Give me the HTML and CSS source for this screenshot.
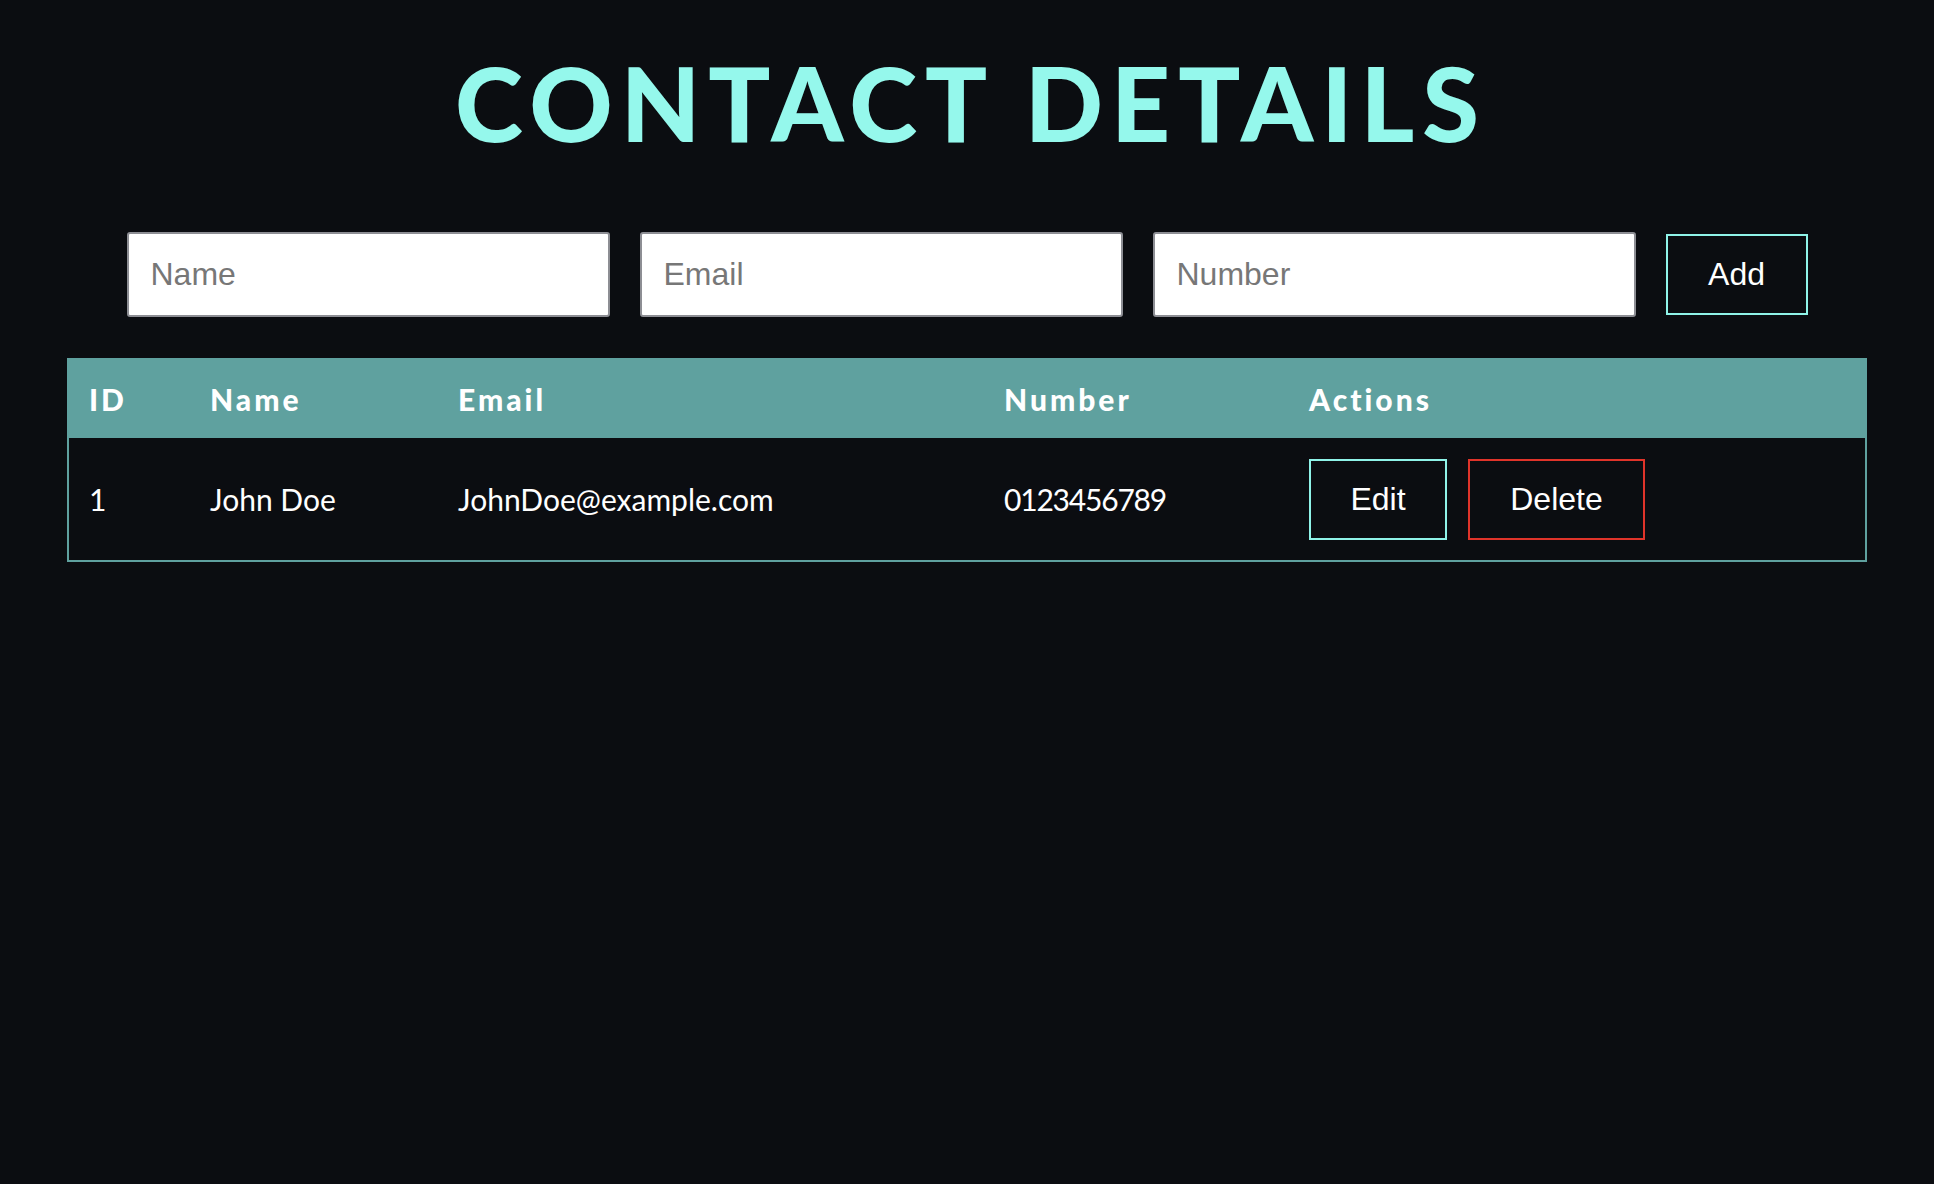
FILE: index.html
```html
<!DOCTYPE html>
<html lang="en">
<head>
<meta charset="utf-8">
<title>Contact Details</title>
<link rel="stylesheet" href="styles.css">
</head>
<body>
<h1 class="title">CONTACT DETAILS</h1>
<form class="add-form">
  <input class="field" type="text" placeholder="Name">
  <input class="field" type="email" placeholder="Email">
  <input class="field" type="text" placeholder="Number">
  <button class="btn btn-add" type="button">Add</button>
</form>
<table class="contacts">
  <thead>
    <tr>
      <th class="col-id">ID</th>
      <th class="col-name">Name</th>
      <th class="col-email">Email</th>
      <th class="col-number">Number</th>
      <th class="col-actions">Actions</th>
    </tr>
  </thead>
  <tbody>
    <tr>
      <td>1</td>
      <td>John Doe</td>
      <td>JohnDoe@example.com</td>
      <td class="cell-number">0123456789</td>
      <td>
        <div class="actions">
          <button class="btn btn-edit" type="button">Edit</button>
          <button class="btn btn-delete" type="button">Delete</button>
        </div>
      </td>
    </tr>
  </tbody>
</table>
</body>
</html>
```

FILE: styles.css
```css
html, body {
  margin: 0;
  padding: 0;
}
body {
  background: #0b0d11;
  color: #ffffff;
  font-family: "Lato", "Open Sans", sans-serif;
  min-height: 1184px;
}
.title {
  margin: 51px 0 0;
  padding-left: 8px;
  font-family: "Lato", sans-serif;
  font-weight: 900;
  font-size: 103px;
  line-height: 1;
  text-align: center;
  color: #95f8ec;
  letter-spacing: 8px;
}
.add-form {
  display: flex;
  justify-content: center;
  align-items: center;
  gap: 30px;
  margin-top: 78px;
}
.field {
  box-sizing: border-box;
  width: 483px;
  height: 85px;
  padding: 0 22px;
  border: 2px solid #8d8e94;
  border-radius: 3px;
  background: #ffffff;
  font-family: "Liberation Sans", Arial, sans-serif;
  font-size: 32px;
  color: #222;
}
.field::placeholder {
  color: #777777;
}
.btn {
  box-sizing: border-box;
  background: transparent;
  color: #ffffff;
  font-family: "Liberation Sans", Arial, sans-serif;
  font-size: 32px;
  cursor: pointer;
  border-radius: 0;
}
.btn-add {
  width: 142px;
  height: 81px;
  border: 2px solid #8ff3e8;
}
.contacts {
  width: 1800px;
  margin: 41px auto 0;
  border-collapse: collapse;
  border: 2px solid #5fa19f;
}
.contacts th {
  background: #5fa19f;
  height: 78px;
  padding: 0 0 0 20px;
  text-align: left;
  font-weight: 900;
  font-size: 30px;
  letter-spacing: 3px;
  color: #ffffff;
}
.contacts td {
  height: 122px;
  padding: 0 0 0 20px;
  font-size: 30px;
  color: #ffffff;
}
.contacts td.cell-number {
  letter-spacing: -1.2px;
}
.col-id { width: 101px; }
.col-name { width: 228px; }
.col-email { width: 526px; }
.col-number { width: 285px; }
.actions {
  display: flex;
  gap: 21px;
}
.btn-edit {
  width: 138px;
  height: 81px;
  border: 2px solid #8ff3e8;
}
.btn-delete {
  width: 177px;
  height: 81px;
  border: 2px solid #e0342a;
}
```
